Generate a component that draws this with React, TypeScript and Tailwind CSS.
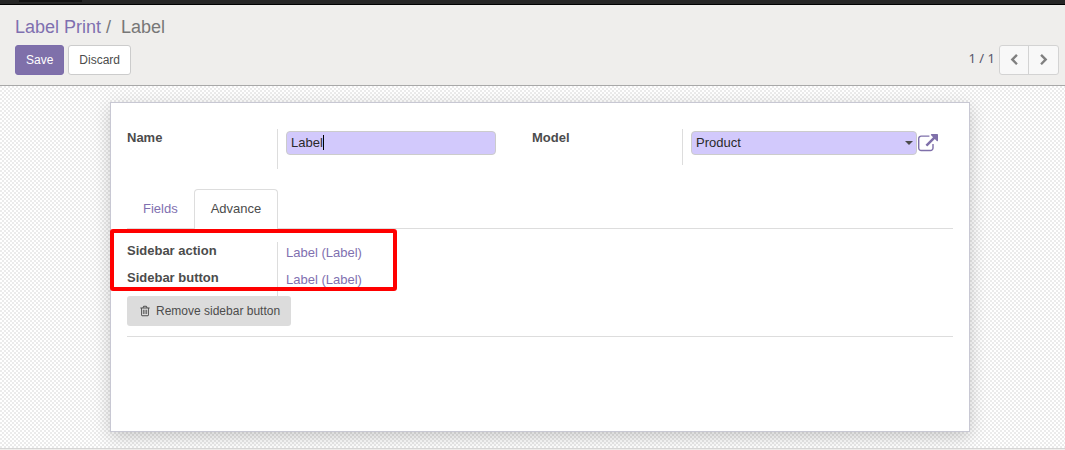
import React, { useState } from "react";

type IconProps = { d: string; className: string };

function Icon({ d, className }: IconProps) {
  return (
    <svg viewBox="0 0 1792 1792" fill="currentColor" aria-hidden="true" className={className}>
      <path d={d} />
    </svg>
  );
}

const CHEVRON_LEFT =
  "M1427 301l-531 531 531 531q19 19 19 45t-19 45l-166 166q-19 19-45 19t-45-19l-742-742q-19-19-19-45t19-45l742-742q19-19 45-19t45 19l166 166q19 19 19 45t-19 45z";
const CHEVRON_RIGHT =
  "M1363 877l-742 742q-19 19-45 19t-45-19l-166-166q-19-19-19-45t19-45l531-531-531-531q-19-19-19-45t19-45l166-166q19-19 45-19t45 19l742 742q19 19 19 45t-19 45z";
const EXTERNAL_LINK =
  "M1408 928v320q0 119-84.5 203.5t-203.5 84.5h-832q-119 0-203.5-84.5t-84.5-203.5v-832q0-119 84.5-203.5t203.5-84.5h704q14 0 23 9t9 23v64q0 14-9 23t-23 9h-704q-66 0-113 47t-47 113v832q0 66 47 113t113 47h832q66 0 113-47t47-113v-320q0-14 9-23t23-9h64q14 0 23 9t9 23zm384-864v512q0 26-19 45t-45 19-45-19l-176-176-652 652q-10 10-23 10t-23-10l-114-114q-10-10-10-23t10-23l652-652-176-176q-19-19-19-45t19-45 45-19h512q26 0 45 19t19 45z";
const TRASH =
  "M704 736v576q0 14-9 23t-23 9h-64q-14 0-23-9t-9-23v-576q0-14 9-23t23-9h64q14 0 23 9t9 23zm256 0v576q0 14-9 23t-23 9h-64q-14 0-23-9t-9-23v-576q0-14 9-23t23-9h64q14 0 23 9t9 23zm256 0v576q0 14-9 23t-23 9h-64q-14 0-23-9t-9-23v-576q0-14 9-23t23-9h64q14 0 23 9t9 23zm128 724v-948h-896v948q0 22 7 40.5t14.5 27 10.5 8.5h832q3 0 10.5-8.5t14.5-27 7-40.5zm-672-1076h448l-48-117q-7-9-17-11h-317q-10 2-17 11zm928 32v64q0 14-9 23t-23 9h-96v948q0 83-47 143.5t-113 60.5h-832q-66 0-113-58.5t-47-141.5v-952h-96q-14 0-23-9t-9-23v-64q0-14 9-23t23-9h309l70-167q15-37 54-63t79-26h320q40 0 79 26t54 63l70 167h309q14 0 23 9t9 23z";

function ControlPanel() {
  return (
    <header className="border-b border-[#a8a8a8] bg-[#efeeec] pr-1.5 pb-2.5 pl-[15px]">
      <nav aria-label="Breadcrumb" className="pt-2.5 text-lg leading-6 text-[#777777]">
        <a href="#label-print" className="text-[#7f70b0]">Label Print</a>
        <span className="pr-2.5 pl-[5px]">/</span>
        <span>Label</span>
      </nav>
      <div className="flex items-center justify-between pt-1.5">
        <div className="flex gap-1 text-xs">
          <button type="button" className="h-[30px] rounded-[3px] border border-[#7c6dab] bg-[#7f70aa] px-2.5 text-white">
            Save
          </button>
          <button type="button" className="h-[30px] rounded-[3px] border border-[#cccccc] bg-white px-2.5 text-[#4c4c4c]">
            Discard
          </button>
        </div>
        <div className="flex items-center gap-1">
          <span className="pb-0.5 font-['Noto_Sans',sans-serif] text-[13px] text-[#55556a]">1 / 1</span>
          <div className="flex h-[30px] overflow-hidden rounded-[3px] border border-[#d3d3d3] bg-[#f8f8f8] text-[#808080]">
            <button type="button" aria-label="Previous" className="flex w-7 items-center justify-center">
              <Icon d={CHEVRON_LEFT} className="size-3" />
            </button>
            <button type="button" aria-label="Next" className="flex w-[30px] items-center justify-center border-l border-[#d3d3d3]">
              <Icon d={CHEVRON_RIGHT} className="size-3" />
            </button>
          </div>
        </div>
      </div>
    </header>
  );
}

function SidebarRow({ label, value }: { label: string; value: string }) {
  return (
    <div className="flex h-[27px]">
      <dt className="w-[150px] font-bold leading-[18px]">{label}</dt>
      <dd className="border-l border-[#dddddd] pt-0.5 pl-2 leading-[18px]">
        <a href="#label" className="text-[#7f70b0]">{value}</a>
      </dd>
    </div>
  );
}

export default function App() {
  const [name, setName] = useState("Label");
  return (
    <div className="flex min-h-screen flex-col bg-[#efeeec] font-['Liberation_Sans',Arial,sans-serif] text-[13px] text-[#4c4c4c]">
      <div className="h-[5px] border-b border-black bg-[#262626] pl-[19px]">
        <div className="h-0.5 w-[63px] bg-[#111111]" />
      </div>
      <ControlPanel />
      <main className="flex-1 bg-[repeating-conic-gradient(#ffffff_0_25%,#ebebeb_0_50%)] bg-[length:4px_4px] py-4 pr-4 pl-[31px]">
        <form
          onSubmit={(e) => e.preventDefault()}
          className="mx-auto min-h-[330px] max-w-[860px] border border-[#c8c8d3] bg-white px-4 pt-[26px] shadow-[0_5px_16px_rgba(0,0,0,0.2)]"
        >
          <div className="grid grid-cols-[405fr_421fr] items-start">
            <div className="flex h-10 pr-9">
              <label htmlFor="name" className="w-[150px] shrink-0 font-bold leading-[18px]">Name</label>
              <div className="min-w-0 flex-1 border-l border-[#dddddd] pt-0.5 pl-2">
                <div className="relative">
                  <input
                    id="name"
                    value={name}
                    onChange={(e) => setName(e.target.value)}
                    className="block h-6 w-full rounded border border-[#cccccc] bg-[#d2c9fc] px-1 pb-0.5 text-[#2a2a2a]"
                  />
                  <span aria-hidden="true" className="absolute top-1 left-[37px] h-[15px] w-px bg-black" />
                </div>
              </div>
            </div>
            <div className="flex h-9 pr-[15px]">
              <label htmlFor="model" className="w-[150px] shrink-0 font-bold leading-[18px]">Model</label>
              <div className="flex min-w-0 flex-1 items-start border-l border-[#dddddd] pt-0.5 pl-2">
                <div className="relative min-w-0 flex-1">
                  <select
                    id="model"
                    className="block h-6 w-full appearance-none rounded border border-[#cccccc] bg-[#d2c9fc] px-1 text-[#2a2a2a]"
                  >
                    <option>Product</option>
                  </select>
                  <svg viewBox="0 0 8 4" fill="#4c4c4c" aria-hidden="true" className="pointer-events-none absolute top-2.5 right-1 h-1 w-2">
                    <path d="M0 0h8L4 4z" />
                  </svg>
                </div>
                <button type="button" aria-label="Open model" className="mt-[3px] ml-px text-[#7f70aa]">
                  <Icon d={EXTERNAL_LINK} className="size-5" />
                </button>
              </div>
            </div>
          </div>

          <div role="tablist" className="mt-5 flex h-10 items-stretch border-b border-[#dddddd]">
            <button type="button" role="tab" aria-selected="false" className="px-4 text-[#7f70b0]">
              Fields
            </button>
            <button
              type="button"
              role="tab"
              aria-selected="true"
              className="-mb-px rounded-t border border-b-0 border-[#dddddd] bg-white px-4 pb-px"
            >
              Advance
            </button>
          </div>

          <div role="tabpanel" className="relative border-b border-[#dddddd] pt-[13px] pb-2.5">
            <dl>
              <SidebarRow label="Sidebar action" value="Label (Label)" />
              <SidebarRow label="Sidebar button" value="Label (Label)" />
            </dl>
            <button type="button" className="flex h-[30px] items-center gap-[5px] rounded-[3px] bg-[#dcdcdc] pr-[11px] pl-3 text-xs">
              <Icon d={TRASH} className="size-3" />
              Remove sidebar button
            </button>
            <div
              aria-hidden="true"
              className="pointer-events-none absolute top-0 -left-[17px] h-[62px] w-[287px] rounded-[3px] border-4 border-[#ff0000]"
            />
          </div>
        </form>
      </main>
      <footer className="h-0.5 border-t border-[#d5d5d5]" />
    </div>
  );
}
